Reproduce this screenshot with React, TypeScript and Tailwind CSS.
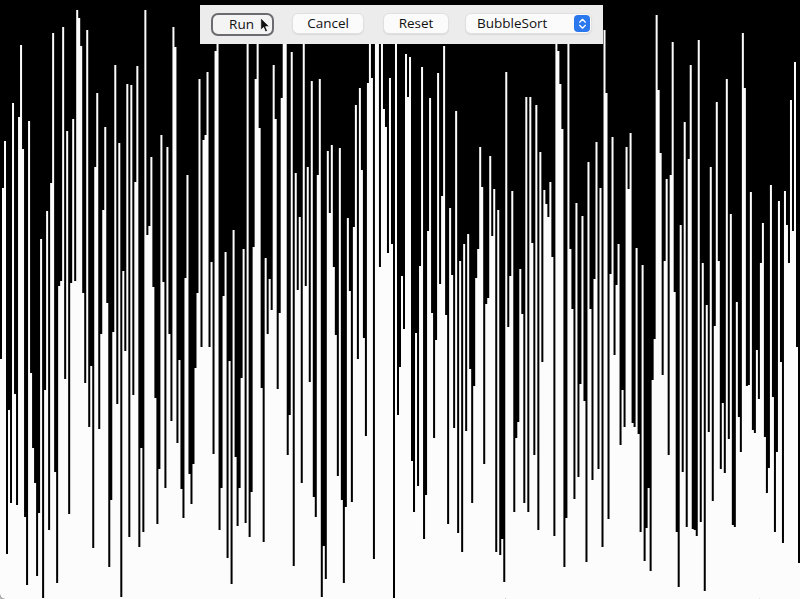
import { ChevronDown, ChevronUp } from 'lucide-react';

// y where each white bar starts, left to right
const tops = [
  359, 188, 141, 554, 410, 503, 103, 394, 505, 117, 45, 149, 517, 585, 121, 373, 448, 483, 576, 513,
  239, 598, 390, 211, 530, 183, 33, 472, 583, 286, 281, 27, 379, 131, 514, 283, 119, 281, 10, 18,
  46, 293, 383, 30, 427, 366, 548, 167, 93, 429, 334, 210, 127, 303, 567, 500, 332, 65, 404, 143,
  597, 271, 351, 84, 537, 85, 395, 182, 66, 547, 448, 532, 10, 235, 226, 157, 287, 398, 524, 469,
  135, 282, 488, 147, 334, 421, 27, 47, 443, 360, 489, 518, 278, 175, 474, 504, 464, 368, 293, 79,
  347, 140, 135, 72, 347, 262, 454, 51, 40, 530, 488, 296, 252, 558, 361, 584, 230, 457, 526, 488,
  378, 249, 523, 30, 537, 492, 247, 79, 30, 128, 388, 542, 258, 334, 279, 310, 65, 119, 389, 313,
  98, 30, 30, 455, 415, 52, 566, 173, 290, 217, 483, 30, 286, 167, 382, 81, 497, 517, 175, 79,
  597, 546, 579, 151, 213, 145, 267, 335, 476, 148, 500, 583, 507, 218, 291, 502, 227, 105, 359, 88,
  170, 338, 436, 83, 30, 78, 559, 30, 30, 267, 30, 109, 127, 253, 78, 244, 598, 30, 415, 367,
  276, 329, 54, 97, 57, 461, 512, 333, 486, 266, 67, 539, 495, 231, 98, 313, 438, 340, 73, 284,
  196, 46, 315, 524, 208, 275, 428, 111, 533, 261, 552, 244, 431, 234, 369, 503, 386, 278, 249, 147,
  187, 464, 304, 298, 156, 236, 189, 552, 210, 555, 539, 582, 72, 327, 276, 191, 512, 438, 422, 269,
  314, 503, 97, 512, 97, 243, 455, 105, 530, 152, 362, 190, 204, 217, 182, 257, 536, 30, 51, 84,
  129, 567, 518, 30, 249, 309, 499, 203, 477, 384, 216, 401, 562, 162, 309, 480, 279, 142, 469,
  188, 547, 30, 93, 519, 274, 137, 355, 285, 244, 445, 390, 427, 147, 189, 133, 423, 427, 248, 434,
  532, 265, 561, 528, 488, 571, 380, 339, 15, 90, 153, 375, 261, 179, 455, 175, 42, 292, 532, 587,
  225, 472, 122, 527, 159, 65, 529, 530, 536, 40, 522, 263, 591, 305, 432, 167, 501, 326, 102, 261,
  469, 403, 473, 79, 439, 214, 525, 527, 302, 417, 452, 33, 88, 386, 385, 192, 430, 433, 350, 399,
  263, 223, 437, 493, 468, 185, 397, 532, 452, 201, 362, 543, 191, 225, 263, 100, 231, 62, 347, 563,
];

const barWidth = 800 / tops.length;
const barsPath = tops
  .map((top, i) => `M${(i * barWidth).toFixed(3)} ${top}H${((i + 1) * barWidth).toFixed(3)}V601H${(i * barWidth).toFixed(3)}z`)
  .join('');

const buttonClass =
  'h-[21px] rounded-[6px] bg-[#fbfbfb] border border-[#e0e0e0] shadow-[0_1px_1px_rgba(0,0,0,0.08)] text-[13.5px] leading-none text-[#111]';

const App = () => {
  return (
    <div className="relative w-[800px] h-[599px] overflow-hidden bg-[#b4b4b4] font-['Open_Sans',sans-serif]">
      <div className="rounded-bl-[5px] overflow-hidden bg-black">
        <svg width="800" height="599" viewBox="0 0 800 599" className="block">
          <path d={barsPath} fill="#fdfcfd" />
        </svg>
      </div>

      <div className="absolute left-[200px] top-[5px] w-[403px] h-[39px] bg-[#ececec] flex items-start pl-[11px] pt-[8px]">
        <button className="w-[63px] h-[23px] rounded-[7px] bg-[#f4f4f4] border-2 border-[#6b6b70] text-[13.5px] leading-none text-[#111] pr-[2px]">
          Run
        </button>
        <button className={`${buttonClass} w-[72px] ml-[18px]`}>Cancel</button>
        <button className={`${buttonClass} w-[66px] ml-[19px]`}>Reset</button>
        <div className={`${buttonClass} w-[127px] ml-[16px] flex items-center justify-between pl-[11px] pr-[1px]`}>
          <span>BubbleSort</span>
          <span className="w-[16px] h-[17px] rounded-[4px] bg-[#2b78ee] flex flex-col items-center justify-center text-white">
            <ChevronUp size={13} strokeWidth={2.6} className="-mb-[6px]" />
            <ChevronDown size={13} strokeWidth={2.6} />
          </span>
        </div>
      </div>

      <svg width="11" height="17" viewBox="0 0 13 20" className="absolute left-[259px] top-[17px]">
        <path
          d="M2 1v14.5l3.4-3.2 2.2 5.4 2.6-1.1-2.3-5.2h4.6z"
          fill="#111"
          stroke="#fff"
          strokeWidth="1"
          strokeLinejoin="round"
        />
      </svg>
    </div>
  );
};

export default App;
